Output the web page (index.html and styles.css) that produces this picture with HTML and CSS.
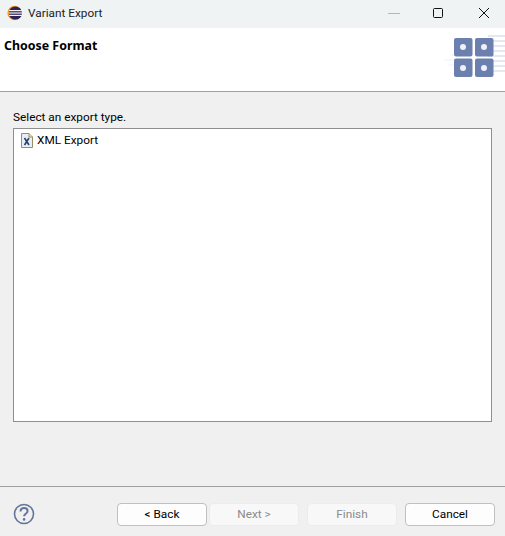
FILE: index.html
```html
<!DOCTYPE html>
<html lang="en">
<head>
    <meta charset="UTF-8">
    <title>Variant Export</title>
    <link rel="stylesheet" href="styles.css">
</head>
<body>

<div class="window">
    <!-- Title bar -->
    <div class="titlebar">
        <svg class="app-icon" width="16" height="16" viewBox="0 0 16 16">
            <circle cx="7.600" cy="8" r="7.200" fill="#f7941e"/>
            <circle cx="8.400" cy="8" r="6.600" fill="#2c2255"/>
            <rect x="2" y="5" width="13" height="1.200" fill="#f2f0f7"/>
            <rect x="1.600" y="7.400" width="13.600" height="1.200" fill="#f2f0f7"/>
            <rect x="2" y="9.800" width="13" height="1.200" fill="#f2f0f7"/>
        </svg>
        <span class="title">Variant Export</span>
        <div class="win-buttons">
            <div class="win-btn">
                <svg width="16" height="12" viewBox="0 0 16 12"><path d="M4 6.500h12" stroke="#b4b7b8" stroke-width="1"/></svg>
            </div>
            <div class="win-btn">
                <svg width="12" height="12" viewBox="0 0 12 12"><rect x="1.500" y="1.500" width="9" height="9" rx="1" fill="none" stroke="#111" stroke-width="1"/></svg>
            </div>
            <div class="win-btn">
                <svg width="12" height="12" viewBox="0 0 12 12"><path d="M1 1l10 10M11 1L1 11" stroke="#111" stroke-width="1"/></svg>
            </div>
        </div>
    </div>

    <!-- Banner -->
    <div class="banner">
        <h3>Choose Format</h3>
        <svg class="banner-icon" width="61" height="50" viewBox="0 0 61 50">
            <g stroke="#e4e8f1" stroke-width="2">
                <path d="M44 7h17M44 12h17M44 17h17M44 22h17M44 27h17M44 32h17M44 37h17M44 42h17"/>
                <path d="M0 31h10M6 26h6M4 36h6" stroke="#f7f8fb"/>
            </g>
            <g fill="#6b80ae">
                <rect x="10" y="9" width="18.500" height="18.500" rx="2"/>
                <rect x="31" y="9" width="18.500" height="18.500" rx="2"/>
                <rect x="10" y="29.500" width="18.500" height="18.500" rx="2"/>
                <rect x="31" y="29.500" width="18.500" height="18.500" rx="2"/>
            </g>
            <g fill="#eef1f7">
                <circle cx="19" cy="18" r="3"/>
                <circle cx="40" cy="18" r="3"/>
                <circle cx="19" cy="39" r="3"/>
                <circle cx="40" cy="39" r="3"/>
            </g>
        </svg>
    </div>

    <!-- Export type list -->
    <div class="content">
        <label class="list-label">Select an export type.</label>
        <div class="list">
            <div class="list-item">
                <svg width="12" height="15" viewBox="0 0 12 15">
                    <path d="M.5.5h7.500l3.500 3.500v10.500h-11z" fill="#e9edf4" stroke="#9a8f62"/>
                    <path d="M8 .5v3.500h3.500" fill="#e7dfb4" stroke="#9a8f62"/>
                    <path d="M3.500 5l4.500 7M8 5l-4.500 7" stroke="#24406e" stroke-width="1.600" fill="none"/>
                </svg>
                <span>XML Export</span>
            </div>
        </div>
    </div>

    <!-- Buttons -->
    <div class="footer">
        <svg class="help" width="22" height="22" viewBox="0 0 22 22">
            <circle cx="11" cy="11" r="9.500" fill="none" stroke="#63759b" stroke-width="1.600"/>
            <path d="M7.500 8.500c0-2.200 1.500-3.500 3.600-3.500s3.500 1.300 3.500 3.100c0 2.700-3.500 2.700-3.500 5.200" fill="none" stroke="#63759b" stroke-width="2"/>
            <circle cx="11.100" cy="16.400" r="1.300" fill="#63759b"/>
        </svg>
        <div class="buttons">
            <button class="btn">&lt; Back</button>
            <button class="btn" disabled>Next &gt;</button>
            <button class="btn btn-finish" disabled>Finish</button>
            <button class="btn">Cancel</button>
        </div>
    </div>
</div>

</body>
</html>
```

FILE: styles.css
```css
html, body {
    margin: 0;
    padding: 0;
}
body {
    font-family: Roboto, "Noto Sans", Arial, sans-serif;
    font-size: 11.800px;
    color: #000;
    background-color: #f0f0f0;
}
.window {
    width: 505px;
    height: 536px;
    display: flex;
    flex-direction: column;
    overflow: hidden;
}
.titlebar {
    height: 28px;
    box-sizing: border-box;
    padding: 0 0 3px 7px;
    display: flex;
    align-items: center;
    background-color: #eff3f4;
}
.app-icon {
    flex: none;
}
.title {
    margin-left: 5px;
    color: #222;
}
.win-buttons {
    margin-left: auto;
    margin-right: -2px;
    display: flex;
}
.win-btn {
    width: 46px;
    display: flex;
    align-items: center;
    justify-content: center;
}
.banner {
    height: 64px;
    box-sizing: border-box;
    background-color: white;
    border-bottom: 1px solid #a0a0a0;
    display: flex;
    justify-content: space-between;
    align-items: flex-start;
}
h3 {
    margin: 9px 0 0 4px;
    font-family: "Noto Sans", Arial, sans-serif;
    font-size: 12.400px;
    font-weight: bold;
    color: black;
}
.banner-icon {
    margin-top: 1px;
}
.content {
    flex: 1;
    padding: 17px 13px 0;
    display: flex;
    flex-direction: column;
}
.list-label {
    line-height: 17px;
    margin-bottom: 2px;
}
.list {
    height: 292px;
    background-color: white;
    border: 1px solid #8f8f8f;
}
.list-item {
    display: flex;
    align-items: center;
    gap: 4px;
    padding: 3px 0 0 7px;
    line-height: 16px;
}
.footer {
    height: 50px;
    box-sizing: border-box;
    border-top: 1px solid #a0a0a0;
    display: flex;
    justify-content: space-between;
    padding: 16px 10px 0 13px;
}
.buttons {
    display: flex;
    gap: 2px;
}
.btn {
    width: 90px;
    height: 23px;
    padding: 0 0 2px;
    font-family: inherit;
    font-size: 11.800px;
    color: #000;
    background-color: #fdfdfd;
    border: 1px solid #c0c0c0;
    border-radius: 4px;
}
.btn:disabled {
    color: #8a8a8a;
    background-color: #f8f8f8;
    border-color: #ececec;
}
.btn-finish {
    margin: 0 6px;
}
```
